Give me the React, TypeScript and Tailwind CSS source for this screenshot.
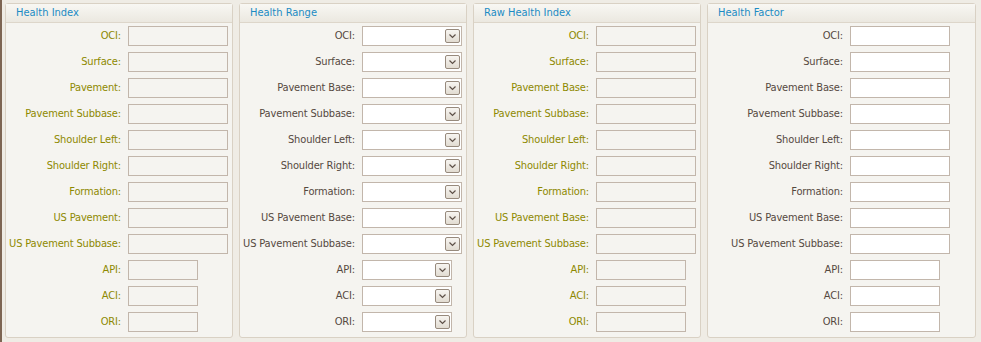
import React from "react";

const base = [
  "OCI:",
  "Surface:",
  "Pavement Base:",
  "Pavement Subbase:",
  "Shoulder Left:",
  "Shoulder Right:",
  "Formation:",
  "US Pavement Base:",
  "US Pavement Subbase:",
  "API:",
  "ACI:",
  "ORI:",
];

const indexLabels = [
  "OCI:",
  "Surface:",
  "Pavement:",
  "Pavement Subbase:",
  "Shoulder Left:",
  "Shoulder Right:",
  "Formation:",
  "US Pavement:",
  "US Pavement Subbase:",
  "API:",
  "ACI:",
  "ORI:",
];

type Kind = "readonly" | "select" | "text";

type PanelProps = {
  title: string;
  labels: string[];
  kind: Kind;
  olive: boolean;
  wide?: boolean;
  smallWidth: string;
};

function ComboArrow() {
  return (
    <span className="flex h-[14px] w-[15px] items-center justify-center rounded-[2px] border border-[#978a7d] bg-gradient-to-b from-[#f7f5f1] to-[#e2dcd2]">
      <svg width="9" height="6" viewBox="0 0 9 6">
        <path d="M1.5 1.5 L4.5 4.5 L7.5 1.5" fill="none" stroke="#5e5148" strokeWidth="1.2" />
      </svg>
    </span>
  );
}

function Field({ kind, width }: { kind: Kind; width: string }) {
  if (kind === "select") {
    return (
      <div className={`flex h-[20px] items-center justify-end border border-[#c2b6ab] bg-white pr-[1px] ${width}`}>
        <ComboArrow />
      </div>
    );
  }
  return (
    <div
      className={`h-[20px] border border-[#c2b6ab] ${width} ${
        kind === "text" ? "bg-white" : "bg-[#f5f4f0]"
      }`}
    />
  );
}

function Panel({ title, labels, kind, olive, wide, smallWidth }: PanelProps) {
  return (
    <div
      className={`flex h-[335px] flex-col rounded-[3px] border border-[#d9d1c4] bg-[#f5f4f0] ${
        wide ? "w-[269px]" : "w-[228px]"
      }`}
    >
      <div className="flex h-[19px] items-center border-b border-[#ddd6ca] bg-gradient-to-b from-[#f8f7f3] to-[#ebe8e0] pl-[10px] text-[11px] text-[#1b8bc4]">
        {title}
      </div>
      <div className="flex flex-col gap-[6px] pt-[3px]">
        {labels.map((label, i) => (
          <div key={label} className="flex items-center">
            <div
              className={`shrink-0 pr-[7px] text-right text-[11px] leading-[20px] tracking-[-0.15px] ${
                wide ? "w-[142px]" : "w-[122px]"
              } ${olive ? "text-[#8e8900]" : "text-[#55493f]"}`}
            >
              {label}
            </div>
            <Field kind={kind} width={i >= 9 ? smallWidth : "w-[100px]"} />
          </div>
        ))}
      </div>
    </div>
  );
}

export default function App() {
  return (
    <div
      className="flex h-[342px] w-[981px] gap-[6px] border-l-2 border-[#7d6553] bg-[#efece5] pl-[3px] pt-[3px]"
      style={{ fontFamily: '"DejaVu Sans Condensed", "Liberation Sans", sans-serif' }}
    >
      <Panel title="Health Index" labels={indexLabels} kind="readonly" olive smallWidth="w-[70px]" />
      <Panel title="Health Range" labels={base} kind="select" olive={false} smallWidth="w-[90px]" />
      <Panel title="Raw Health Index" labels={base} kind="readonly" olive smallWidth="w-[90px]" />
      <Panel title="Health Factor" labels={base} kind="text" olive={false} wide smallWidth="w-[90px]" />
    </div>
  );
}
